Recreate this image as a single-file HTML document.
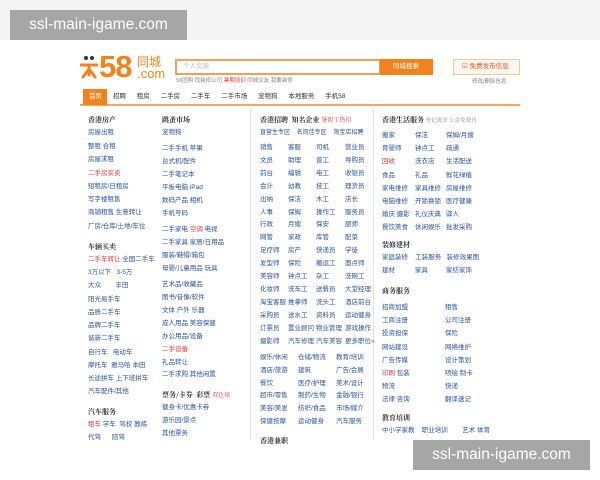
<!DOCTYPE html>
<html><head><meta charset="utf-8">
<style>
*{margin:0;padding:0;box-sizing:border-box}
body{width:600px;height:480px;background:#fff;position:relative;overflow:hidden;font-family:"Liberation Sans","Noto Sans CJK SC",sans-serif}
.a{position:absolute;white-space:nowrap;font-size:6.5px;line-height:8px;color:#2a52a0}
.b{color:#333;font-weight:bold;font-size:7px;font-family:"Noto Serif CJK SC","Noto Sans CJK SC",serif}
.r{color:#e3393c}
.g{color:#888}
.wm{position:absolute;width:177px;height:30px;background:#a6a6a6;color:#fff;font-size:15.5px;line-height:30px;text-align:center}
</style></head><body>
<div style="position:absolute;left:0;top:0;width:600px;height:40px;background:#f4f4f4"></div>
<div style="position:absolute;left:70px;top:40px;width:460px;height:400px;background:#fff"></div>

<!-- logo -->
<svg style="position:absolute;left:80px;top:55px" width="18" height="26" viewBox="0 0 18 26">
<circle cx="6" cy="3" r="2" fill="#333"/><circle cx="12" cy="3" r="2" fill="#333"/>
<path d="M1 10 H17 M9 10 V20 M9 14 L3 22 M9 14 L15 22" stroke="#f0831e" stroke-width="3" fill="none" stroke-linecap="round"/>
</svg>
<div class="a" style="left:99px;top:51px;font-size:31px;line-height:32px;font-weight:bold;color:#f0831e;letter-spacing:-1px">58</div>
<div class="a" style="left:137px;top:55px;font-size:12px;line-height:14px;color:#f0831e">同城</div>
<div class="a" style="left:137px;top:67px;font-size:13px;line-height:14px;color:#f0831e">.com</div>

<!-- search -->
<div style="position:absolute;left:175px;top:59px;width:206px;height:16px;border:2px solid #f0a050;background:#fff"></div>
<div class="a g" style="left:183px;top:63px;color:#bbb">个人房源</div>
<div style="position:absolute;left:380px;top:59px;width:53px;height:16px;background:#f0831e"></div>
<div class="a" style="left:393px;top:63px;color:#fff">同城搜索</div>
<div class="a g" style="left:176px;top:77px;font-size:5.5px">58团购 找装修公司 <span class="r">暑期培训</span> 同城交友 我要装修</div>
<div style="position:absolute;left:453px;top:59px;width:67px;height:16px;border:1px solid #f0c9a0;background:#fdf5ee"></div>
<div class="a r" style="left:462px;top:63px;color:#e05a1a">☑ 免费发布信息</div>
<div class="a g" style="left:472px;top:78px;font-size:5.5px">修改/删除信息</div>

<!-- nav -->
<div style="position:absolute;left:80px;top:104px;width:440px;height:2px;background:#f0a860"></div>
<div style="position:absolute;left:83px;top:89px;width:24px;height:16px;background:#f0831e"></div>
<div class="a" style="left:89px;top:93px;color:#fff">首页</div>
<div class="a" style="left:113px;top:93px;color:#333;word-spacing:9px">招聘 租房 二手房 二手车 二手市场 宠物狗 本地服务 手机58</div>

<!-- separators -->
<div style="position:absolute;left:250px;top:108px;width:1px;height:332px;background:#e4e4e4"></div>
<div style="position:absolute;left:373px;top:108px;width:1px;height:332px;background:#e4e4e4"></div>

<!-- col1 -->
<div class="a b" style="left:88px;top:116px">香港房产</div>
<div class="a" style="left:88px;top:129px">房屋出租</div>
<div class="a" style="left:88px;top:143px">整租 合租</div>
<div class="a" style="left:88px;top:156px">房屋求租</div>
<div class="a r" style="left:88px;top:170px">二手房买卖</div>
<div class="a" style="left:88px;top:183px">短租房/日租房</div>
<div class="a" style="left:88px;top:196px">写字楼租售</div>
<div class="a" style="left:88px;top:209px">商铺租售 生意转让</div>
<div class="a" style="left:88px;top:223px">厂房/仓库/土地/车位</div>
<div class="a b" style="left:88px;top:243px">车辆买卖</div>
<div class="a" style="left:88px;top:256px"><span class="r">二手车转让</span> 全国二手车</div>
<div class="a" style="left:88px;top:269px">3万以下 &nbsp;&nbsp;3-5万</div>
<div class="a" style="left:88px;top:282px">大众 &nbsp;&nbsp;&nbsp;&nbsp;&nbsp;&nbsp;&nbsp;丰田</div>
<div class="a" style="left:88px;top:296px">阳光易手车</div>
<div class="a" style="left:88px;top:309px">品质二手车</div>
<div class="a" style="left:88px;top:322px">品牌二手车</div>
<div class="a" style="left:88px;top:335px">诚新二手车</div>
<div class="a" style="left:88px;top:349px">自行车 &nbsp;&nbsp;电动车</div>
<div class="a" style="left:88px;top:362px">摩托车 &nbsp;雅马哈 本田</div>
<div class="a" style="left:88px;top:375px">长途拼车 上下班拼车</div>
<div class="a" style="left:88px;top:388px">汽车配件/其他</div>
<div class="a b" style="left:88px;top:408px">汽车服务</div>
<div class="a" style="left:88px;top:421px"><span class="r">租车</span> 学车 &nbsp;驾校 教练</div>
<div class="a" style="left:88px;top:434px">代驾 &nbsp;&nbsp;&nbsp;&nbsp;&nbsp;陪驾</div>

<!-- col2 -->
<div class="a b" style="left:162px;top:116px">跳蚤市场</div>
<div class="a" style="left:162px;top:129px">宠物狗</div>
<div class="a" style="left:162px;top:145px">二手手机 苹果</div>
<div class="a" style="left:162px;top:158px">台式机/配件</div>
<div class="a" style="left:162px;top:171px">二手笔记本</div>
<div class="a" style="left:162px;top:184px">平板电脑 iPad</div>
<div class="a" style="left:162px;top:197px">数码产品 相机</div>
<div class="a" style="left:162px;top:210px">手机号码</div>
<div class="a" style="left:162px;top:226px">二手家电 <span class="r">空调</span> 电视</div>
<div class="a" style="left:162px;top:239px">二手家具 家居/日用品</div>
<div class="a" style="left:162px;top:252px">服装/鞋帽/箱包</div>
<div class="a" style="left:162px;top:265px">母婴/儿童用品 玩具</div>
<div class="a" style="left:162px;top:281px">艺术品/收藏品</div>
<div class="a" style="left:162px;top:294px">图书/音像/软件</div>
<div class="a" style="left:162px;top:307px">文体 户外 乐器</div>
<div class="a" style="left:162px;top:320px">成人用品 美容保健</div>
<div class="a" style="left:162px;top:333px">办公用品/设备</div>
<div class="a r" style="left:162px;top:346px">二手设备</div>
<div class="a" style="left:162px;top:359px">礼品转让</div>
<div class="a" style="left:162px;top:371px">二手求购 其他闲置</div>
<div class="a b" style="left:162px;top:391px">票务/卡券 &nbsp;彩票 <span class="r" style="font-weight:normal;font-size:6px">双色球</span></div>
<div class="a" style="left:162px;top:404px">健身卡/优惠卡券</div>
<div class="a" style="left:162px;top:417px">游乐园/景点</div>
<div class="a" style="left:162px;top:430px">其他票务</div>

<!-- col3 -->
<div class="a b" style="left:260px;top:116px">香港招聘 &nbsp;知名企业 <span class="r" style="font-weight:normal;font-size:6px">暑假工热招</span></div>
<div class="a" style="left:260px;top:129px;font-size:6px">直营生专区 &nbsp;&nbsp;&nbsp;名岗佳专区 &nbsp;&nbsp;&nbsp;淘宝店招聘</div>
<div style="position:absolute;left:260px;top:142px;font-size:6.5px;line-height:12.9px;color:#2a52a0;white-space:nowrap">
<div style="position:absolute;left:0">销售<br>文员<br>前台<br>会计<br>出纳<br>人事<br>行政<br>网管<br>足疗师<br>发型师<br>美容师<br>化妆师<br>淘宝客服<br>采购员<br>订票员<br>摄影师</div>
<div style="position:absolute;left:28px">客服<br>助理<br>编辑<br>幼教<br>保洁<br>保姆<br>月嫂<br>家政<br>房产<br>保险<br>钟点工<br>洗车工<br>推拿师<br>送水工<br>置业顾问<br>汽车修理</div>
<div style="position:absolute;left:56px">司机<br>普工<br>电工<br>技工<br>木工<br>操作工<br>保安<br>库管<br>快递员<br>搬运工<br>杂工<br>送餐员<br>洗头工<br>资料员<br>物业管理<br>汽车美容</div>
<div style="position:absolute;left:85px">营业员<br>导购员<br>收银员<br>理货员<br>店长<br>服务员<br>厨师<br>配菜<br>学徒<br>面点师<br>洗碗工<br>大堂经理<br>酒店前台<br>运动健身<br>游戏操作<br>更多职位»</div>
</div>
<div style="position:absolute;left:260px;top:352px;font-size:6.5px;line-height:12.8px;color:#2a52a0;white-space:nowrap">
<div style="position:absolute;left:0">娱乐/休闲<br>酒店/旅游<br>餐饮<br>超市/零售<br>美容/美发<br>保健按摩</div>
<div style="position:absolute;left:38px">仓储/物流<br>建筑<br>医疗/护理<br>制药/生物<br>纺织/食品<br>运动健身</div>
<div style="position:absolute;left:76px">教育/培训<br>广告/会展<br>美术/设计<br>金融/银行<br>市场/媒介<br>汽车服务</div>
</div>
<div class="a b" style="left:260px;top:437px">香港兼职</div>

<!-- col4 -->
<div class="a b" style="left:382px;top:116px">香港生活服务 <span class="g" style="font-weight:normal;font-size:5.5px">登记需求 公益免费刊</span></div>
<div style="position:absolute;left:382px;top:129px;font-size:6.5px;line-height:13.2px;color:#2a52a0;white-space:nowrap">
<div style="position:absolute;left:0">搬家<br>育婴师<br><span class="r">回收</span><br>食品<br>家电维修<br>电脑维修<br>婚庆 摄影<br>餐饮美食</div>
<div style="position:absolute;left:33px">保洁<br>钟点工<br>洗衣店<br>礼品<br>家具维修<br>开锁换锁<br>礼仪庆典<br>休闲娱乐</div>
<div style="position:absolute;left:64px">保姆/月嫂<br>疏通<br>生活配送<br>鲜花绿植<br>房屋维修<br>医疗健康<br>驿人<br>批发采购</div>
</div>
<div class="a b" style="left:382px;top:241px">装修建材</div>
<div class="a" style="left:382px;top:254px">家庭装修 &nbsp;&nbsp;&nbsp;工装服务 &nbsp;&nbsp;装修效果图</div>
<div class="a" style="left:382px;top:267px">建材 &nbsp;&nbsp;&nbsp;&nbsp;&nbsp;&nbsp;&nbsp;&nbsp;&nbsp;&nbsp;家具 &nbsp;&nbsp;&nbsp;&nbsp;&nbsp;&nbsp;&nbsp;&nbsp;&nbsp;家纺家饰</div>
<div class="a b" style="left:382px;top:287px">商务服务</div>
<div style="position:absolute;left:382px;top:301px;font-size:6.5px;line-height:13.2px;color:#2a52a0;white-space:nowrap">
<div style="position:absolute;left:0">招商加盟<br>工商注册<br>投资担保<br>网站建设<br>广告传媒<br><span class="r">印刷</span> 包装<br>物流<br>法律 咨询</div>
<div style="position:absolute;left:63px">租售<br>公司注册<br>保险<br>网络维护<br>设计策划<br>喷绘 制卡<br>快递<br>翻译速记</div>
</div>
<div class="a b" style="left:382px;top:414px">教育培训</div>
<div class="a" style="left:382px;top:427px">中小学家教 &nbsp;&nbsp;&nbsp;职业培训 &nbsp;&nbsp;&nbsp;&nbsp;&nbsp;&nbsp;&nbsp;艺术 体育</div>

<div class="wm" style="left:10px;top:10px">ssl-main-igame.com</div>
<div class="wm" style="left:413px;top:440px">ssl-main-igame.com</div>
</body></html>
